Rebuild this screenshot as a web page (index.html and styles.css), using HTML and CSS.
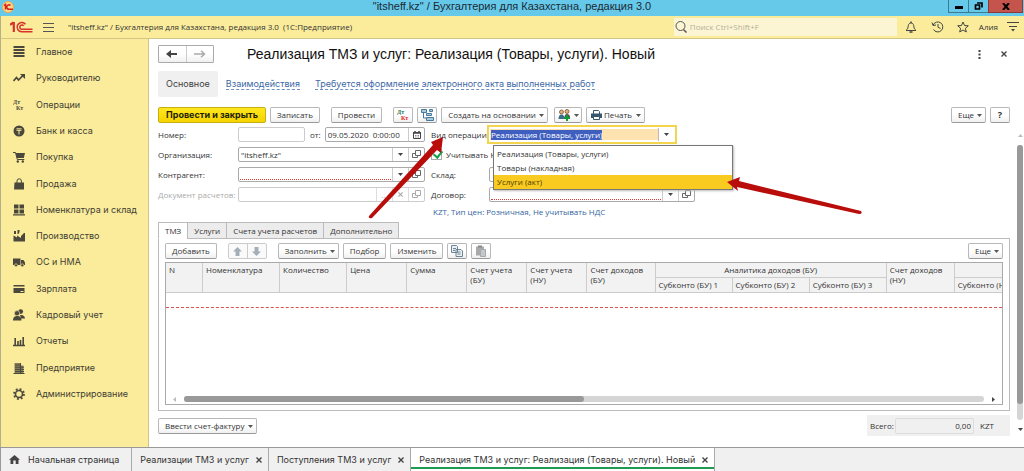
FILE: index.html
```html
<!DOCTYPE html>
<html lang="ru">
<head>
<meta charset="utf-8">
<title>"itsheff.kz" / Бухгалтерия для Казахстана, редакция 3.0</title>
<link rel="stylesheet" href="styles.css">
</head>
<body>
<svg class="defs" aria-hidden="true">
  <symbol id="open" viewBox="0 0 9 9"><path d="M3.5.5h5v5h-5zM3.5 3.5h-3v4h5v-2" fill="none" stroke="currentColor"/></symbol>
  <symbol id="caret" viewBox="0 0 5 3"><path d="M0 0h5L2.500 3z" fill="currentColor"/></symbol>
  <symbol id="cross" viewBox="0 0 6 6"><path d="M.5.5l5 5M5.500.5l-5 5" stroke="currentColor" stroke-width="1.400"/></symbol>
</svg>
<div class="app">
  <header class="titlebar">
    <svg class="app-logo" viewBox="0 0 12 12"><circle cx="6" cy="6" r="5.500" fill="#fbd98a" stroke="#e9a84c"/><path d="M2 4.500l1.500-1v5M8.500 4.500a2.200 2.200 0 1 0-1 3.700h3.500" fill="none" stroke="#d8201c" stroke-width="1.500"/></svg>
    <h1 class="window-title">"itsheff.kz" / Бухгалтерия для Казахстана, редакция 3.0</h1>
    <div class="window-buttons">
      <button class="win" aria-label="Свернуть"><svg width="8" height="8"><path d="M0 5.500h8" stroke="#000" stroke-width="3"/></svg></button>
      <button class="win" aria-label="Развернуть"><svg width="9" height="8"><path d="M3 1h5v4.500M1.500 3h4v4h-4z" fill="none" stroke="#000" stroke-width="1.700"/></svg></button>
      <button class="win win-close" aria-label="Закрыть"><svg width="8" height="7"><path d="M1 0l6 7M7 0L1 7" stroke="#000" stroke-width="2"/></svg></button>
    </div>
  </header>

  <div class="header">
    <svg class="logo" viewBox="0 0 23 12"><g fill="none" stroke="#d5322e"><path d="M0 3.800L3.500 1.500M3.800 11V1" stroke-width="2.200"/><path d="M15.500 3.200A4.700 4.700 0 1 0 12 10.800h10.500" stroke-width="1.500"/><path d="M13.700 4.700A2.200 2.200 0 1 0 12 8.300h10.500" stroke-width="1.500"/></g></svg>
    <button class="icon-btn" aria-label="Меню"><svg width="11" height="9"><path d="M0 .5h11M0 4.500h11M0 8.500h11" stroke="#555"/></svg></button>
    <span class="app-name">"itsheff.kz" / Бухгалтерия для Казахстана, редакция 3.0&nbsp; (1С:Предприятие)</span>
    <label class="search"><svg width="12" height="12"><circle cx="5.500" cy="5" r="4.500" fill="none" stroke="#555"/><path d="M8.500 8.500l3 3" stroke="#555" stroke-width="1.500"/></svg><input type="search" placeholder="Поиск Ctrl+Shift+F" aria-label="Поиск"></label>
    <button class="icon-btn" aria-label="Уведомления"><svg width="12" height="13" fill="none" stroke="#444"><path d="M1 9.500C3 8 3 6.500 3.300 4.500 3.600 2.800 4.700 2 6 2s2.400.8 2.700 2.500C9 6.500 9 8 11 9.500z"/><path d="M6 .5V2M4.500 11h3" stroke-width="1.500"/></svg></button>
    <button class="icon-btn" aria-label="История"><svg width="13" height="12" fill="none" stroke="#444"><path d="M2.200 4A5 5 0 1 1 2.500 8.500"/><path d="M1 1.500l1 3 3-.5M7 3v3.200l2.500 1.300"/></svg></button>
    <button class="icon-btn" aria-label="Избранное"><svg width="12" height="12"><path d="M6 1l1.500 3.500 3.800.3-2.900 2.500.9 3.700L6 9l-3.300 2 .9-3.700L.7 4.800l3.800-.3z" fill="none" stroke="#444"/></svg></button>
    <button class="user">Алия</button>
    <button class="icon-btn" aria-label="Сервис"><svg width="12" height="10"><path d="M0 .5h12M2 4.500h8" stroke="#444"/><path d="M4 7h4L6 9.500z" fill="#444"/></svg></button>
  </div>

  <div class="workspace">
    <nav class="sidebar">
      <a href="#"><svg viewBox="0 0 12 12"><path d="M.5 1h11M.5 4h11M.5 7h11M.5 10h11" stroke="currentColor" stroke-width="1.800"/></svg>Главное</a>
      <a href="#"><svg viewBox="0 0 12 12"><path d="M.5 9l3-3.500 2 2.500 4.500-4.500" fill="none" stroke="currentColor" stroke-width="1.700"/><path d="M7 2h5v5z" fill="currentColor"/></svg>Руководителю</a>
      <a href="#"><svg class="dtkt" viewBox="0 0 12 12"><text x="0" y="5">Дт</text><text x="3" y="11">Кт</text></svg>Операции</a>
      <a href="#"><svg viewBox="0 0 12 12"><circle cx="6" cy="6" r="5.500" fill="currentColor"/><path d="M3.500 3.800h5M3.500 5.300h5M6 5v4.500" stroke="#faec9b"/></svg>Банк и касса</a>
      <a href="#"><svg viewBox="0 0 12 12"><path d="M2.500 2H12l-1.200 5H4z" fill="currentColor"/><path d="M0 1.500h2.500L4.300 8.500h7" fill="none" stroke="currentColor"/><circle cx="4.800" cy="10.500" r="1.200" fill="currentColor"/><circle cx="9.800" cy="10.500" r="1.200" fill="currentColor"/></svg>Покупка</a>
      <a href="#"><svg viewBox="0 0 12 12"><path d="M1.500 4.500h9.500v7H1z" fill="currentColor"/><path d="M4 5.500V3a2.200 2.200 0 0 1 4.400 0v2.500" fill="none" stroke="currentColor"/></svg>Продажа</a>
      <a href="#"><svg viewBox="0 0 12 12"><path d="M1 .5h4.500v4H1zM6.500.5H11v4H6.500zM1 5.500h4.500v4H1zM6.500 5.500H11v4H6.500zM0 10.200h12v1.300H0z" fill="currentColor"/></svg>Номенклатура и склад</a>
      <a href="#"><svg viewBox="0 0 12 12"><path d="M.5 11.500v-6l3.500 2V5.500l4 2.500V6l3-3h1v8.500zM1 1h2v3H1zM4.500 0h2v2l-1 2h-1z" fill="currentColor"/></svg>Производство</a>
      <a href="#"><svg viewBox="0 0 12 12"><path d="M0 2.500h7.500v6.500H0zM8 4h2.500L12 6.500V9H8z" fill="currentColor"/><circle cx="3" cy="9.300" r="1.500" fill="currentColor" stroke="#faec9b" stroke-width=".6"/><circle cx="9.300" cy="9.300" r="1.500" fill="currentColor" stroke="#faec9b" stroke-width=".6"/></svg>ОС и НМА</a>
      <a href="#"><svg viewBox="0 0 12 12"><path d="M.5 2h11v1.500H.5zM.5 5h11v5H.5z" fill="currentColor"/><path d="M7.500 8.500h3" stroke="#faec9b"/></svg>Зарплата</a>
      <a href="#"><svg viewBox="0 0 12 12"><circle cx="7.700" cy="2.600" r="2.400" fill="currentColor"/><path d="M7 6c3-.5 5 1.500 5 3.500H8z" fill="currentColor"/><circle cx="4" cy="4.200" r="2.600" fill="currentColor" stroke="#faec9b" stroke-width=".6"/><path d="M0 11.500C0 8 2 7 4.200 7s4.300 1 4.300 4.500z" fill="currentColor"/></svg>Кадровый учет</a>
      <a href="#"><svg viewBox="0 0 12 12"><path d="M0 10.500h12M2.200 10V3M5 10V6M7.500 10V5M10.200 10V2" stroke="currentColor" stroke-width="1.600"/></svg>Отчеты</a>
      <a href="#"><svg viewBox="0 0 12 12"><path d="M1.500 1h6v2.500h3v8h-9z" fill="#88825c"/><path d="M2 3h5M2 5.200h9M2 7.400h9M2 9.500h9M.5 11.500h11M7.500 1v10" stroke="currentColor"/></svg>Предприятие</a>
      <a href="#"><svg viewBox="0 0 12 12"><circle cx="6" cy="6" r="3.500" fill="none" stroke="currentColor" stroke-width="1.600"/><circle cx="6" cy="6" r="5" fill="none" stroke="currentColor" stroke-width="1.800" stroke-dasharray="1.900 2.027"/></svg>Администрирование</a>
    </nav>

    <main class="main">
      <div class="doc-head">
        <div class="history">
          <button aria-label="Назад"><svg width="12" height="8"><path d="M2 4h9" stroke="#444" stroke-width="2"/><path d="M0 4l5-4v8z" fill="#444"/></svg></button>
          <button aria-label="Вперед"><svg width="12" height="8"><path d="M0 4h9.500M7 .8L10.500 4 7 7.200" fill="none" stroke="#aaa" stroke-width="1.500"/></svg></button>
        </div>
        <h2 class="doc-title">Реализация ТМЗ и услуг: Реализация (Товары, услуги). Новый</h2>
        <button class="plain" aria-label="Меню формы"><svg width="3" height="9"><path d="M1.500 0v9" stroke="#444" stroke-width="2" stroke-dasharray="2 1.500"/></svg></button>
        <button class="plain" aria-label="Закрыть форму"><svg width="6" height="6"><use href="#cross"/></svg></button>
      </div>

      <div class="sections">
        <span class="section-current">Основное</span>
        <a href="#">Взаимодействия</a>
        <a href="#">Требуется оформление электронного акта выполненных работ</a>
      </div>

      <div class="commands">
        <button class="btn btn-main">Провести и закрыть</button>
        <button class="btn">Записать</button>
        <button class="btn btn-apart">Провести</button>
        <button class="btn btn-apart btn-icon" aria-label="Проводки"><svg class="dtkt" width="13" height="12"><text class="debit" x="0" y="5">Дт</text><text class="credit" x="4" y="11">Кт</text></svg></button>
        <button class="btn btn-icon" aria-label="Структура подчиненности"><svg width="13" height="12"><path d="M2.500 4v5H5M7 4v1" fill="none" stroke="#4a7898"/><path d="M.5.5h5v3h-5zM5.500 4.500h5v2h-5zM5.500 8.500h7v3h-7zM8.500.5h3v2h-3z" fill="#a9cbe0" stroke="#4a7898"/></svg></button>
        <button class="btn">Создать на основании<svg class="caret"><use href="#caret"/></svg></button>
        <button class="btn btn-people" aria-label="Контакты"><svg width="13" height="12"><circle cx="3.500" cy="3" r="2" fill="#e8b27a" stroke="#71502e" stroke-width=".8"/><circle cx="9" cy="2.500" r="2" fill="#e8b27a" stroke="#71502e" stroke-width=".8"/><path d="M.5 10c0-3 1-4.500 3-4.500s3 1.500 3 4.500z" fill="#3a6f8c"/><path d="M6.500 8c0-2 1-3 2.500-3s3 1 3 3z" fill="#555"/><path d="M9 6v6M6 9h6" stroke="#139a3a" stroke-width="2"/></svg><svg class="caret"><use href="#caret"/></svg></button>
        <button class="btn btn-print"><svg width="11" height="10"><path d="M2.500 4V.5h5l1 1V4" fill="#fff" stroke="#38566e"/><path d="M0 3.500h11V8H0z" fill="#38566e"/><path d="M2.500 6.500h6v3h-6z" fill="#fff" stroke="#38566e"/></svg>Печать<svg class="caret"><use href="#caret"/></svg></button>
        <button class="btn push">Еще<svg class="caret"><use href="#caret"/></svg></button>
        <button class="btn btn-help" aria-label="Справка">?</button>
      </div>

      <div class="body">
        <div class="content">
          <div class="form">
            <div class="row"><label for="num">Номер:</label>
              <span class="field num"><input id="num"></span>
              <label class="from" for="date">от:</label>
              <span class="field grow"><input id="date" value="09.05.2020  0:00:00"><button aria-label="Календарь"><svg width="8" height="8"><path d="M.5 1.500h7v6h-7z" fill="none" stroke="#444"/><path d="M0 2h8M2 0v2M6 0v2" stroke="#444" stroke-width="1.500"/><path d="M2 4.500h4M2 6h4" stroke="#888" stroke-dasharray="1 .5"/></svg></button></span></div>
            <div class="row second"><label for="op">Вид операции:</label>
              <div class="combo">
                <span class="combo-box"><input id="op" value="Реализация (Товары, услуги)"><button aria-label="Выбрать"><svg class="tri"><use href="#caret"/></svg></button></span>
                <ul class="popup" role="listbox" aria-label="Вид операции">
                  <li role="option">Реализация (Товары, услуги)</li>
                  <li role="option">Товары (накладная)</li>
                  <li role="option" class="picked" aria-selected="true">Услуги (акт)</li>
                </ul>
              </div></div>

            <div class="row"><label for="org">Организация:</label>
              <span class="field grow"><input id="org" value='"itsheff.kz"'><button aria-label="Выбрать"><svg class="tri"><use href="#caret"/></svg></button><button aria-label="Открыть"><svg width="9" height="9"><use href="#open"/></svg></button></span></div>
            <div class="row second"><label class="check"><input type="checkbox" checked>Учитывать НДС</label></div>

            <div class="row"><label for="ctr">Контрагент:</label>
              <span class="field grow required"><input id="ctr"><button aria-label="Выбрать"><svg class="tri"><use href="#caret"/></svg></button><button aria-label="Открыть"><svg width="9" height="9"><use href="#open"/></svg></button></span></div>
            <div class="row second"><label for="store">Склад:</label>
              <span class="field wide"><input id="store"><button aria-label="Выбрать"><svg class="tri"><use href="#caret"/></svg></button><button aria-label="Открыть"><svg width="9" height="9"><use href="#open"/></svg></button></span></div>

            <div class="row off"><label for="doc">Документ расчетов:</label>
              <span class="field grow"><input id="doc" disabled><button disabled>...</button><button disabled aria-label="Очистить"><svg width="5" height="5" viewBox="0 0 6 6"><use href="#cross"/></svg></button><button disabled aria-label="Открыть"><svg width="9" height="9"><use href="#open"/></svg></button></span></div>
            <div class="row second"><label for="deal">Договор:</label>
              <span class="field wide required"><input id="deal"><button aria-label="Выбрать"><svg class="tri"><use href="#caret"/></svg></button><button aria-label="Открыть"><svg width="9" height="9"><use href="#open"/></svg></button></span></div>

            <a class="price" href="#">KZT, Тип цен: Розничная, Не учитывать НДС</a>
          </div>

          <div class="tabs" role="tablist">
            <button role="tab" class="tab active" aria-selected="true">ТМЗ</button>
            <button role="tab" class="tab">Услуги</button>
            <button role="tab" class="tab">Счета учета расчетов</button>
            <button role="tab" class="tab">Дополнительно</button>
          </div>
          <section class="panel">
            <div class="tools">
              <button class="btn">Добавить</button>
              <span class="pair"><button aria-label="Вверх"><svg width="9" height="9"><path d="M4.500 0L9 4.500H6.500V9h-4V4.500H0z" fill="#a3afb7"/></svg></button><button aria-label="Вниз"><svg width="9" height="9"><path d="M4.500 9L9 4.500H6.500V0h-4v4.500H0z" fill="#a3afb7"/></svg></button></span>
              <button class="btn">Заполнить<svg class="caret"><use href="#caret"/></svg></button>
              <button class="btn">Подбор</button>
              <button class="btn">Изменить</button>
              <button class="btn btn-icon" aria-label="Скопировать"><svg width="12" height="12"><path d="M.5.500h5l1 1v6h-6zM5 4.500h5l1.500 1.500v5.500H5z" fill="#e8f0f4" stroke="#6c8494"/><path d="M2 3.500h3M2 5.500h2M6.500 7h3M6.500 9h3" stroke="#6c8494"/></svg></button>
              <button class="btn btn-icon" aria-label="Вставить"><svg width="12" height="12"><path d="M1 1.500h8v9H1z" fill="#aaa"/><path d="M3 .5h4v2H3z" fill="#888"/><path d="M5.500 4.500h5v7h-5z" fill="#c4c8ca" stroke="#a4a9ac"/></svg></button>
              <button class="btn push">Еще<svg class="caret"><use href="#caret"/></svg></button>
            </div>
            <div class="grid">
              <div class="grid-view">
              <table>
                <colgroup><col class="c-n"><col class="c-sub"><col class="c-qty"><col class="c-m"><col class="c-m"><col class="c-m"><col class="c-m"><col class="c-acc"><col class="c-sub"><col class="c-sub"><col class="c-sub"><col class="c-acc"><col class="c-sub"></colgroup>
                <thead>
                  <tr><th rowspan="2">N</th><th rowspan="2">Номенклатура</th><th rowspan="2">Количество</th><th rowspan="2">Цена</th><th rowspan="2">Сумма</th><th rowspan="2">Счет учета (БУ)</th><th rowspan="2">Счет учета (НУ)</th><th rowspan="2">Счет доходов (БУ)</th><th colspan="3" class="group">Аналитика доходов (БУ)</th><th rowspan="2">Счет доходов (НУ)</th><th></th></tr>
                  <tr><th>Субконто (БУ) 1</th><th>Субконто (БУ) 2</th><th>Субконто (БУ) 3</th><th>Субконто (НУ) 1</th></tr>
                </thead>
                <tbody><tr><td colspan="13"></td></tr></tbody>
              </table>
              </div>
              <div class="hscroll"><svg class="arr faded" viewBox="0 0 3 5"><path d="M3 0v5L0 2.500z"/></svg><div class="track"><div class="thumb"></div></div><svg class="arr" viewBox="0 0 3 5"><path d="M0 0v5l3-2.500z"/></svg></div>
            </div>
          </section>

          <div class="foot">
            <button class="btn">Ввести счет-фактуру<svg class="caret"><use href="#caret"/></svg></button>
            <div class="total"><label for="sum">Всего:</label><input id="sum" value="0,00" readonly><span>KZT</span></div>
          </div>
        </div>
        <div class="vscroll"><svg class="arr-v faded" viewBox="0 0 5 3"><path d="M0 3h5L2.500 0z"/></svg><div class="vtrack"><div class="vthumb"></div></div><svg class="arr-v" viewBox="0 0 5 3"><path d="M0 0h5L2.500 3z"/></svg></div>
      </div>
    </main>
  </div>

  <footer class="windows">
    <a class="win-tab home" href="#"><svg width="11" height="9"><path d="M5.500 0L11 4.800H9.500V9H6.700V5.500H4.300V9H1.500V4.800H0z" fill="#444"/></svg>Начальная страница</a>
    <div class="win-tab"><a href="#">Реализации ТМЗ и услуг</a><button class="plain" aria-label="Закрыть"><svg width="6" height="6"><use href="#cross"/></svg></button></div>
    <div class="win-tab"><a href="#">Поступления ТМЗ и услуг</a><button class="plain" aria-label="Закрыть"><svg width="6" height="6"><use href="#cross"/></svg></button></div>
    <div class="win-tab current"><a href="#">Реализация ТМЗ и услуг: Реализация (Товары, услуги). Новый</a><button class="plain" aria-label="Закрыть"><svg width="6" height="6"><use href="#cross"/></svg></button></div>
  </footer>

  <svg class="pointer to-label" viewBox="0 0 76 84"><path d="M75 1L63 6l2 3L1 80q-1 3 3 2L69 14l4 3z" fill="#b80d0b"/></svg>
  <svg class="pointer to-option" viewBox="0 0 138 40"><path d="M2 6L15 1l-1 4L136 35q2 3-2 3L12 11l1 4z" fill="#b80d0b"/></svg>
</div>
<script src="app.js"></script>
</body>
</html>
```
FILE: styles.css
```css
* { box-sizing: border-box; }
html, body { height: 100%; margin: 0; }
body { font: 8px/10px "Open Sans", "Noto Sans", sans-serif; color: #333; background: #fff; }
button, input { font: inherit; color: inherit; margin: 0; padding: 0; border: 0; background: none; }
input { min-width: 0; outline: 0; }
button { display: flex; align-items: center; justify-content: center; white-space: nowrap; }
a { color: inherit; text-decoration: none; }
svg { flex: none; display: block; }
.defs { position: absolute; width: 0; height: 0; }
.app { position: relative; display: flex; flex-direction: column; min-height: 100%; overflow: hidden; }

.titlebar { display: flex; height: 16px; padding: 0 1px 0 2px; background: #66c9ea; }
.app-logo { width: 12px; height: 12px; margin-top: 1px; }
.window-title { flex: 1; margin: 0 0 0 62px; font: 11px/13px "Liberation Sans", Arial, sans-serif; text-align: center; color: #1c2a33; }
.window-buttons { display: flex; height: 13px; }
.win { width: 20px; border: 1px solid #3c7b92; border-top: 0; border-right: 0; }
.win-close { width: 35px; background: #c4544c; border: 1px solid #8a3b36; border-top: 0; }

.header { display: flex; align-items: center; height: 23px; padding: 0 5px 0 9px; background: #faec9b; border-bottom: 1px solid #d3c684; border-left: 1px solid #b5ae86; }
.logo { width: 23px; height: 12px; margin-right: 9px; }
.icon-btn { width: 13px; height: 16px; margin-right: 13px; }
.app-name { flex: 1; }
.search { display: flex; align-items: center; gap: 3px; width: 223px; height: 18px; margin-right: 8px; padding-left: 1px; background: #fcf5d4; }
.search input { flex: 1; }
.search input::placeholder { color: #b5b09a; opacity: 1; }
.user { margin: 0 8px 0 -4px; }
.header .icon-btn:last-child { margin-right: 0; }
.dtkt text { font: bold 6px "Liberation Serif", "Times New Roman", serif; fill: currentColor; }
.dtkt .debit { fill: #16713a; }
.dtkt .credit { fill: #d22; }

.workspace { flex: 1; display: flex; min-height: 0; }
.sidebar { display: flex; flex-direction: column; width: 149px; padding-bottom: 40px; background: #faec9b; border-left: 1px solid #b5ae86; border-right: 1px solid #cfc58b; font: 9px/12px Inter, sans-serif; color: #3f3d33; }
.sidebar a { flex: 1; display: flex; align-items: center; gap: 11px; padding-left: 12px; }
.sidebar svg { width: 12px; height: 12px; color: #4a473d; }

.main { flex: 1; min-width: 0; display: flex; flex-direction: column; padding: 6px 0 11px 9px; }
.doc-head { display: flex; align-items: center; height: 18px; padding-right: 17px; }
.history { display: flex; width: 56px; height: 18px; border: 1px solid #aaa; border-radius: 1px; background: linear-gradient(#fff 50%, #f0f0f0); }
.history button { flex: 1; }
.history button + button { border-left: 1px solid #ccc; }
.doc-title { flex: 1; margin: 0 0 0 33px; font: 14px/18px "Liberation Sans", Arial, sans-serif; color: #111; }
.plain { flex: none; color: #444; }
.doc-head .plain { margin-left: 20px; }

.sections { display: flex; align-items: center; gap: 15px; margin-top: 8px; font: 9px/10px Inter, sans-serif; color: #3d3d3d; }
.sections a { color: #3d68a5; border-bottom: 1px dashed #6d8fc0; }
.section-current { padding: 8px; margin-right: -7px; background: #f0f0f0; border-radius: 2px; }

.commands, .tools { display: flex; align-items: center; gap: 4px; }
.commands { margin-top: 10px; padding-right: 14px; }
.btn { flex: none; height: 16px; padding: 0 6px; border: 1px solid #b8b8b8; border-bottom-color: #999; border-radius: 2px; background: linear-gradient(#fff 50%, #f0f0f0); }
.btn-main { padding: 0 7px; font: bold 9px/12px Inter, sans-serif; color: #221d00; background: linear-gradient(#ffe71f, #f5d400); border-color: #c9ae10; }
.btn-apart { margin-left: 7px; }
.btn-icon { width: 20px; padding: 0; }
.btn-people { width: 28px; padding: 0 4px; }
.commands .btn-people { margin-left: 2px; }
.btn-print { padding: 0 4px; gap: 2px; }
.btn-help { width: 20px; padding: 0; font-weight: bold; font-size: 9px; }
.caret { width: 5px; height: 3px; margin: 1px -3px 0 3px; color: #555; }
.btn-people .caret { margin-right: -1px; }
.btn-print .caret { margin: 1px -1px 0 2px; }
.push { width: 35px; margin-left: auto; }

.body { flex: 1; display: flex; min-height: 0; }
.content { flex: 1; min-width: 0; display: flex; flex-direction: column; }
.form { display: grid; grid-template-columns: 267px minmax(0, 1fr); column-gap: 6px; row-gap: 5px; padding-top: 4px; }
.row { display: flex; align-items: center; min-width: 0; height: 15px; white-space: nowrap; }
.row > label:first-child { width: 80px; flex: none; }
.row.second > label:first-child { width: 58px; }
.field { display: flex; min-width: 0; height: 15px; border: 1px solid #aaa; border-radius: 2px; background: #fff; }
.field input { flex: 1; width: 0; padding: 0 2px; }
.field button { flex: none; width: 16px; border-left: 1px solid #ccc; color: #666; }
.tri { width: 5px; height: 3px; color: #444; }
.grow { flex: 1; }
.num { flex: none; width: 67px; border-color: #ccc; }
.from { margin: 0 4px 0 5px; }
.wide { width: 206px; }
.required input { margin: 0 1px 1px; border-bottom: 1px dotted #e03c3c; }
.off { color: #aaa; }
.off .field { border-color: #ccc; }
.off .field button { border-color: #ddd; color: #aaa; }
.row.second > .check { display: flex; align-items: center; gap: 4px; width: auto; }
.check input { appearance: none; flex: none; width: 11px; height: 11px; border: 1px solid #aaa; background: #fff; position: relative; }
.check input::after { content: ""; position: absolute; left: 3px; top: -1px; width: 4px; height: 7px; border: solid #17a04a; border-width: 0 2px 2px 0; transform: rotate(40deg); }

.combo { position: relative; flex: none; width: 190px; margin-left: -2px; }
.combo-box { display: flex; height: 19px; padding: 1px; border: 2px solid #f2d44e; background: #fff; }
.combo-box input { flex: 1; margin: 1px 0; padding: 0 1px; background: #fee3b1; caret-color: transparent; }
.combo-box input::selection { background: #3f5fc0; color: #fff; }
.combo-box button { width: 16px; border-left: 1px solid #bbb; }
.popup { position: absolute; z-index: 2; left: 6px; top: 20px; width: 240px; margin: 0; padding: 1px 0 0; list-style: none; background: #fff; border: 1px solid #777; box-shadow: 1px 1px 2px #bbb; }
.popup li { padding: 2px 3px; }
.popup .picked { background: #f9cb20; color: #4f3c00; }
.price { grid-column: 2; padding-left: 2px; color: #3464a0; }

.tabs { display: flex; margin-top: 5px; position: relative; z-index: 1; }
.tab { height: 17px; padding: 0 6px; margin-left: -1px; background: #ececec; border: 1px solid #bbb; }
.tab.active { margin-left: 0; background: #fff; border-bottom-color: #fff; }
.panel { flex: 1; display: flex; flex-direction: column; margin: -1px 0 0; padding: 4px 6px 5px; border: 1px solid #bbb; }
.pair { display: flex; width: 39px; height: 16px; margin: 0 7px; border: 1px solid #ccc; border-radius: 2px; background: #fafafa; }
.pair button { flex: 1; }
.pair button + button { border-left: 1px solid #ccc; }
.grid { flex: 1; display: flex; flex-direction: column; margin-top: 3px; border: 1px solid #aaa; }
.grid-view { flex: 1; overflow: hidden; }
table { width: 866px; table-layout: fixed; border-collapse: separate; border-spacing: 0; }
.c-n { width: 37px; }
.c-sub { width: 77px; }
.c-qty { width: 67px; }
.c-m { width: 60px; }
.c-acc { width: 68px; }
th { height: 15px; padding: 2px 3px; font-weight: normal; text-align: left; vertical-align: top; background: #f2f2f2; border: 1px solid #ccc; border-width: 0 1px 1px 0; white-space: nowrap; }
th[rowspan] { white-space: normal; }
.group { text-align: center; }
td { height: 15px; padding: 0; border-bottom: 1px dashed #d65050; }
.hscroll { display: flex; align-items: center; gap: 8px; height: 10px; padding: 0 7px; }
.arr { width: 3px; height: 5px; fill: #444; }
.arr-v { width: 5px; height: 3px; fill: #444; }
.faded { fill: #bbb; }
.track { flex: 1; height: 6px; border-radius: 3px; background: #d5d5d5; }
.thumb { width: 50%; height: 6px; border-radius: 3px; background: #999; }

.foot { display: flex; align-items: center; justify-content: space-between; margin-top: 4px; }
.total { display: flex; align-items: center; width: 143px; height: 21px; padding: 0 3px; background: #f0f0f0; }
.total input { width: 79px; height: 16px; margin: 0 6px 0 auto; padding: 0 2px; border: 1px solid #ddd; border-radius: 2px; text-align: right; }
.total span { width: 27px; }
.vscroll { display: flex; flex-direction: column; align-items: center; gap: 8px; width: 14px; padding: 11px 0 5px 6px; }
.vtrack { flex: 1; width: 6px; border-radius: 3px; background: #d5d5d5; }
.vthumb { width: 6px; height: 94%; border-radius: 3px; background: #999; }

.windows { display: flex; height: 24px; background: #f0f0f0; border-top: 1px solid #999; border-left: 1px solid #999; font: 9px/12px Inter, sans-serif; }
.win-tab { display: flex; align-items: center; gap: 7px; padding: 0 6px 0 8px; border-right: 1px solid #aaa; white-space: nowrap; }
.home { gap: 8px; padding: 0 12px 0 8px; }
.current { background: #fff; box-shadow: inset 0 -2px #fff, inset 0 -4px #1e9a52; }

.pointer { position: absolute; z-index: 3; pointer-events: none; }
.to-label { left: 368px; top: 136px; width: 76px; height: 84px; }
.to-option { left: 725px; top: 176px; width: 138px; height: 40px; }
```
FILE: app.js
```js
const operation = document.getElementById('op');
operation.focus();
operation.select();
```
